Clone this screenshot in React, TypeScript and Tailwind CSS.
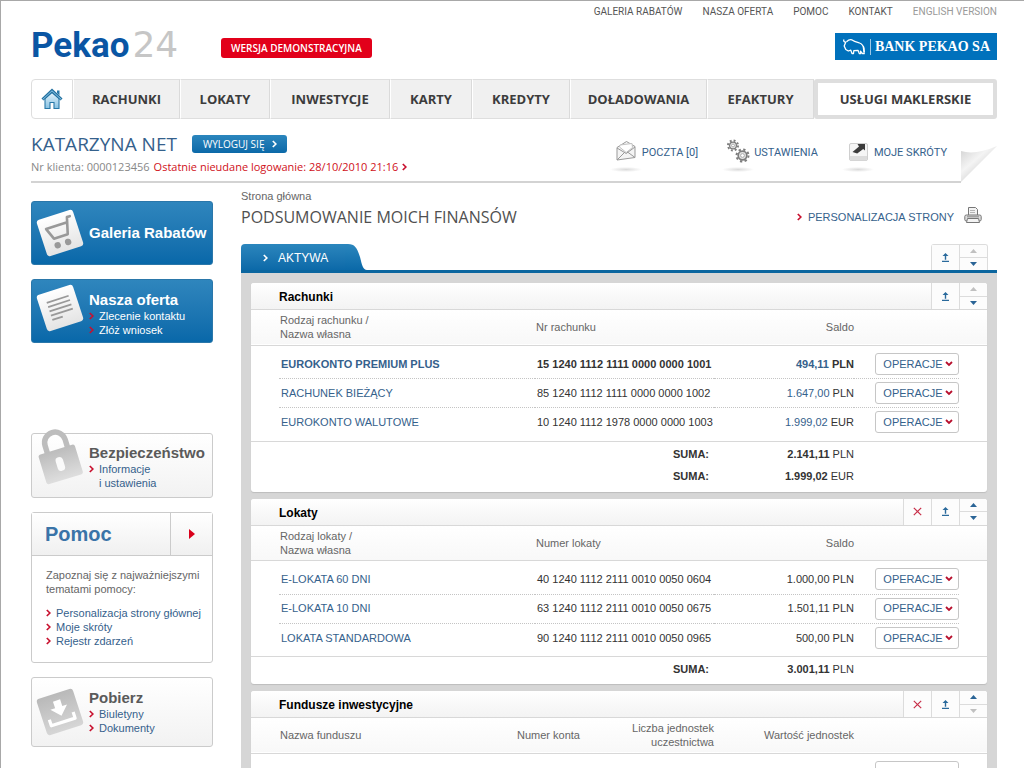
import React from "react";

const HEAD = "font-['Open_Sans',sans-serif]";
const CAPS = "font-[Roboto,sans-serif]";

function Chevron({ className = "text-[#c8102e]" }: { className?: string }) {
  return (
    <svg className={`h-2 w-[5px] shrink-0 ${className}`} viewBox="0 0 5 8" fill="none" stroke="currentColor" strokeWidth="1.7" aria-hidden="true">
      <path d="M.8 1 3.9 4 .8 7" />
    </svg>
  );
}

function HouseIcon() {
  return (
    <svg className="h-[22px] w-[22px]" viewBox="0 0 22 22" aria-hidden="true">
      <defs>
        <linearGradient id="house" x1="0" y1="0" x2="0" y2="1">
          <stop offset="0" stopColor="#e4f3fb" />
          <stop offset="1" stopColor="#86c1e2" />
        </linearGradient>
      </defs>
      <path d="M4 10.5V20.5h5v-6h4v6h5v-10L11 4.500z" fill="url(#house)" stroke="#2878a8" strokeWidth="1.1" />
      <path d="M16 2.500h2.500v5L16 5z" fill="#2878a8" />
      <path d="M1.500 11.500 11 2.500l9.500 9" fill="none" stroke="#22709f" strokeWidth="3" />
      <path d="M1.800 11.400 11 2.800l9.200 8.600" fill="none" stroke="#8cc8ea" strokeWidth="1" />
    </svg>
  );
}

function BisonIcon() {
  return (
    <svg className="h-[18px] w-6" viewBox="0 0 24 18" fill="none" stroke="#fff" strokeWidth="1.3" strokeLinejoin="round" aria-hidden="true">
      <path d="M2 1.500c-.8 1.600.2 2.800 1.800 2.600L2.200 8l1.600 3.500 2.500 1.500 2.500-.8 1.200 3.300h1.500l.3-2.800 4.200-.4 1.400 3.400h1.400l-.3-2.600 2.100 2.600h1.600L21.500 10.500c0-3-1.500-4.500-4-5.500S13 4 11 2.500 6.500 1.800 4.500 3.800" />
      <path d="M21.300 8c1 1.500 1 4 1 6" />
    </svg>
  );
}

function IconShadow({ children }: { children: React.ReactNode }) {
  return (
    <span className="flex w-8 flex-col items-center">
      {children}
      <span className="mt-1 h-[5px] w-8 bg-[radial-gradient(closest-side,#dadada,#ffffff)]" />
    </span>
  );
}

function EnvelopeIcon() {
  return (
    <svg className="h-6 w-6" viewBox="0 0 24 24" fill="#f4f4f4" stroke="#999" strokeWidth="1" strokeLinejoin="round" aria-hidden="true">
      <path d="M3 8.500 12.500 2.500l8.500 5v11l-18 2.500z" />
      <path d="M5.500 8 6 6l12-1.500.5 4-6.300 5z" fill="#fff" stroke="#c2c2c2" />
      <path d="M3 9l9.200 5.500L21 8M3 21l7.500-7.500M21 18.500l-7.500-5.500" fill="none" />
    </svg>
  );
}

function GearsIcon() {
  return (
    <svg className="h-6 w-6" viewBox="0 0 24 24" fill="none" stroke="#7d7d7d" aria-hidden="true">
      <circle cx="7" cy="6.500" r="3.400" strokeWidth="1.300" fill="#f0f0f0" />
      <circle cx="7" cy="6.500" r="5" strokeWidth="2" strokeDasharray="1.900 2.030" />
      <circle cx="7" cy="6.500" r="1.500" fill="#fff" stroke="#aaa" />
      <circle cx="16.500" cy="16.500" r="4.300" strokeWidth="1.700" fill="#e4e4e4" />
      <circle cx="16.500" cy="16.500" r="6" strokeWidth="2" strokeDasharray="2.300 2.410" />
      <circle cx="16.500" cy="16.500" r="1.900" fill="#fff" stroke="#aaa" />
    </svg>
  );
}

function ShortcutIcon() {
  return (
    <svg className="h-6 w-6" viewBox="0 0 24 24" aria-hidden="true">
      <rect x="3.500" y="4.500" width="18" height="17" rx="1.500" fill="#f5f5f5" stroke="#cfcfcf" />
      <path d="M4 17h17v3a1.500 1.500 0 0 1-1.500 1.500h-14A1.500 1.500 0 0 1 4 20z" fill="#dcdcdc" />
      <path d="M6.500 13 13 7.500 11.500 5H19v6.500l-1.800-1.500-6 4.500z" fill="#3c3c3c" />
    </svg>
  );
}

function PrinterIcon() {
  return (
    <svg className="h-[18px] w-[18px]" viewBox="0 0 18 18" fill="#f3f3f3" stroke="#777" aria-hidden="true">
      <path d="M4.500 9.500V1.500h7l2 2v6" />
      <path d="M6 4.500h5M6 6.500h5" stroke="#b5b5b5" />
      <rect x=".8" y="9" width="16.400" height="6" rx="1.500" fill="#ddd" />
      <path d="M3.500 12.500h11l1 4h-13z" />
      <path d="M3 10.800h12" stroke="#8b8b8b" />
    </svg>
  );
}

function TileIcon({ kind }: { kind: "cart" | "list" | "download" }) {
  const gray = kind === "download";
  return (
    <svg className="h-12 w-12 shrink-0" viewBox="0 0 48 48" aria-hidden="true">
      <defs>
        <linearGradient id={`tile-${kind}`} x1="0" y1="0" x2="0" y2="1">
          <stop offset="0" stopColor={gray ? "#b9b9b9" : "#ffffff"} />
          <stop offset="1" stopColor={gray ? "#d6d6d6" : "#e4e4e4"} />
        </linearGradient>
      </defs>
      <g transform="rotate(-18 24 24)">
        <rect x="5" y="5" width="38" height="38" rx="3" fill={`url(#tile-${kind})`} />
        {kind === "cart" && (
          <g fill="none" stroke="#999" strokeWidth="2.600" strokeLinejoin="round" strokeLinecap="round">
            <path d="M38.500 11h-3l-4.500 16.500H16.500L12 16h20.500" />
            <circle cx="18" cy="35" r="1.900" fill="#999" />
            <circle cx="29" cy="35" r="1.900" fill="#999" />
          </g>
        )}
        {kind === "list" && <path d="M13 15h23M13 19.500h23M13 24h23M13 28.500h23M13 33h11" stroke="#999" strokeWidth="1.800" />}
        {kind === "download" && (
          <g fill="#fff">
            <path d="M20.500 12h7.500v7h5l-8.700 9-8.800-9h5z" />
            <path d="M11.500 28v6.500h25V28" fill="none" stroke="#fff" strokeWidth="3.200" strokeLinejoin="round" />
          </g>
        )}
      </g>
    </svg>
  );
}

function LockIcon() {
  return (
    <svg className="-mt-2 h-[60px] w-12 shrink-0" viewBox="0 0 48 60" aria-hidden="true">
      <defs>
        <linearGradient id="lock" x1="0" y1="0" x2="0" y2="1">
          <stop offset="0" stopColor="#bcbcbc" />
          <stop offset="1" stopColor="#dedede" />
        </linearGradient>
      </defs>
      <g transform="rotate(-17 24 36)">
        <path d="M14.500 26V16a10.500 10.500 0 0 1 21 0v10" fill="none" stroke="#bdbdbd" strokeWidth="5.500" />
        <rect x="5" y="23" width="38" height="31" rx="2.500" fill="url(#lock)" />
        <rect x="20" y="31" width="7.500" height="14" rx="3.500" fill="#fafafa" />
      </g>
    </svg>
  );
}

const navItems = ["RACHUNKI", "LOKATY", "INWESTYCJE", "KARTY", "KREDYTY", "DOŁADOWANIA", "EFAKTURY"];

function Header() {
  return (
    <header>
      <div className={`flex h-5 items-center justify-end gap-5 text-[10px] text-[#555] ${CAPS}`}>
        <a href="#galeria">GALERIA RABATÓW</a>
        <a href="#oferta">NASZA OFERTA</a>
        <a href="#pomoc">POMOC</a>
        <a href="#kontakt">KONTAKT</a>
        <a href="#en" className="text-[#999]">ENGLISH VERSION</a>
      </div>
      <div className="flex h-[58px] items-start pt-2">
        <a href="#start" aria-label="Pekao24" className="flex w-[190px] items-baseline gap-[3px] leading-8">
          <span className="font-[Roboto,sans-serif] text-[35px] font-bold text-[#0a56a4]">Pekao</span>
          <span className="font-['DejaVu_Sans',sans-serif] text-[36px] text-[#c6c6c6]">24</span>
        </a>
        <span className={`mt-[9px] flex h-5 items-center rounded-[3px] bg-[#e2001a] px-[10px] text-[10px] font-semibold text-white ${HEAD}`}>
          WERSJA DEMONSTRACYJNA
        </span>
        <a href="#bank" className="mt-1 ml-auto flex h-[27px] items-center bg-[#0071bc] px-[7px] font-['Liberation_Serif',serif] text-[14px] font-bold text-white">
          <BisonIcon />
          <span className="mr-1 ml-1 h-4 w-px bg-[#9cc8e6]" />
          BANK PEKAO SA
        </a>
      </div>
      <nav className={`grid h-10 grid-cols-[42fr_107fr_90fr_120fr_82fr_98fr_137fr_107fr_183fr] text-[13px] font-bold text-[#3c3c3c] ${HEAD}`}>
        <a href="#home" aria-label="Start" className="flex items-center justify-center rounded-l-sm border border-[#dedede] bg-white">
          <HouseIcon />
        </a>
        {navItems.map((item) => (
          <a key={item} href={`#${item.toLowerCase()}`} className="flex items-center justify-center border-y border-r border-l border-y-[#dedede] border-r-[#dadada] border-l-white bg-[#f0f0f0] pt-[2px]">
            {item}
          </a>
        ))}
        <a href="#maklerskie" className="flex items-center justify-center rounded-[3px] border-4 border-[#dedede] bg-white pt-[2px]">
          USŁUGI MAKLERSKIE
        </a>
      </nav>
    </header>
  );
}

function UserBar() {
  return (
    <section className="flex h-16 items-end">
      <div className="flex h-16 grow items-start justify-between border-b-2 border-[#d3d3d3]">
        <div>
          <div className="flex h-[41px] items-end gap-[15px]">
            <h2 className={`text-[19px] leading-8 text-[#35618c] ${HEAD}`}>KATARZYNA NET</h2>
            <button type="button" className={`mb-[7px] flex h-[18px] items-center gap-2 rounded-[3px] bg-linear-to-b from-[#2b86bd] to-[#0a69a8] pr-[10px] pl-[11px] text-[10px] text-white ${HEAD}`}>
              WYLOGUJ SIĘ <Chevron className="text-white" />
            </button>
          </div>
          <p className={`flex items-center gap-1 text-[11px] leading-[14px] text-[#888] ${HEAD}`}>
            Nr klienta: 0000123456
            <a href="#logowania" className="flex items-center gap-1 text-[#d01020]">
              Ostatnie nieudane logowanie: 28/10/2010 21:16 <Chevron />
            </a>
          </p>
        </div>
        <div className={`flex gap-6 pt-5 pr-[14px] text-[11px] leading-7 text-[#35618c] ${CAPS}`}>
          <a href="#poczta" className="flex"><IconShadow><EnvelopeIcon /></IconShadow>POCZTA [0]</a>
          <a href="#ustawienia" className="flex"><IconShadow><GearsIcon /></IconShadow>USTAWIENIA</a>
          <a href="#skroty" className="flex"><IconShadow><ShortcutIcon /></IconShadow>MOJE SKRÓTY</a>
        </div>
      </div>
      <svg className="h-[37px] w-9 shrink-0" viewBox="0 0 36 37" aria-hidden="true">
        <defs>
          <linearGradient id="curl" x1="0" y1="0" x2=".6" y2=".7">
            <stop offset="0" stopColor="#d0d0d0" />
            <stop offset=".6" stopColor="#f4f4f4" />
            <stop offset="1" stopColor="#d6d6d6" />
          </linearGradient>
        </defs>
        <path d="M0 5c10 3 22 1 36-5L0 36z" fill="url(#curl)" />
      </svg>
    </section>
  );
}

function SideLink({ children, className = "text-[#35618c]" }: { children: React.ReactNode; className?: string }) {
  return (
    <li className="flex items-start gap-[5px]">
      <Chevron className="mt-[3px] text-[#c8102e]" />
      <a href="#more" className={className}>{children}</a>
    </li>
  );
}

const blueCard = "flex h-16 rounded-[3px] border border-[#2a77aa] bg-linear-to-b from-[#2f86bd] to-[#0868a9] text-white";
const grayCard = "flex rounded-[3px] border border-[#cbcbcb] bg-linear-to-b from-white to-[#f2f2f2]";

function Sidebar() {
  return (
    <aside className="w-[182px] shrink-0 pt-[18px] text-[11px] leading-[14px]">
      <a href="#galeria" className={`${blueCard} items-center gap-[5px] pl-1`}>
        <TileIcon kind="cart" />
        <span className="text-[15px] font-bold whitespace-nowrap">Galeria Rabatów</span>
      </a>
      <div className={`${blueCard} mt-[14px] gap-[5px] pt-1 pl-1`}>
        <TileIcon kind="list" />
        <div className="pt-[7px]">
          <h3 className="text-[15px] leading-[18px] font-bold">Nasza oferta</h3>
          <ul>
            <SideLink className="text-white">Zlecenie kontaktu</SideLink>
            <SideLink className="text-white">Złóż wniosek</SideLink>
          </ul>
        </div>
      </div>
      <div className={`${grayCard} mt-[90px] h-[65px] gap-[5px] pl-1`}>
        <LockIcon />
        <div className="pt-[10px]">
          <h3 className="text-[15px] leading-[18px] font-bold text-[#5a5a5a]">Bezpieczeństwo</h3>
          <ul>
            <SideLink>Informacje<br />i ustawienia</SideLink>
          </ul>
        </div>
      </div>
      <div className="mt-[14px] rounded-[3px] border border-[#cbcbcb] bg-white">
        <div className="flex h-[43px] items-stretch border-b border-[#cbcbcb] bg-linear-to-b from-white to-[#f0f0f0]">
          <h3 className="flex grow items-center pl-[13px] text-[20px] font-bold text-[#3a74a8]">Pomoc</h3>
          <a href="#pomoc" aria-label="Pomoc" className="flex w-[42px] items-center justify-center border-l border-[#cbcbcb]">
            <svg className="h-[10px] w-[6px]" viewBox="0 0 6 10" aria-hidden="true"><path d="M0 0 6 5 0 10z" fill="#d9001b" /></svg>
          </a>
        </div>
        <div className="h-[106px] pt-3 pl-[14px] text-[#666]">
          <p>Zapoznaj się z najważniejszymi<br />tematami pomocy:</p>
          <ul className="mt-[10px]">
            <SideLink>Personalizacja strony głównej</SideLink>
            <SideLink>Moje skróty</SideLink>
            <SideLink>Rejestr zdarzeń</SideLink>
          </ul>
        </div>
      </div>
      <div className={`${grayCard} mt-[14px] h-[70px] gap-[5px] pt-[10px] pl-1`}>
        <TileIcon kind="download" />
        <div>
          <h3 className="text-[15px] leading-[19px] font-bold text-[#5a5a5a]">Pobierz</h3>
          <ul>
            <SideLink>Biuletyny</SideLink>
            <SideLink>Dokumenty</SideLink>
          </ul>
        </div>
      </div>
    </aside>
  );
}

function Controls({ closable = false, up = true, down = true }: { closable?: boolean; up?: boolean; down?: boolean }) {
  const cell = "flex w-7 items-center justify-center border-l border-[#dcdcdc] bg-[#fcfcfc]";
  return (
    <div className="flex items-stretch">
      {closable && (
        <button type="button" aria-label="Usuń" className={cell}>
          <svg className="h-[9px] w-[9px]" viewBox="0 0 9 9" stroke="#c8304a" strokeWidth="1.200" aria-hidden="true"><path d="M.8.800l7.400 7.400M8.200.800.800 8.200" /></svg>
        </button>
      )}
      <button type="button" aria-label="Zwiń" className={cell}>
        <svg className="h-[9px] w-[7px]" viewBox="0 0 7 9" fill="#2a6a9c" aria-hidden="true"><path d="M3.500 0 6.500 3H4.200v3.800H2.800V3H.5zM0 7.800h7V9H0z" /></svg>
      </button>
      <div className="flex w-7 flex-col border-l border-[#dcdcdc] bg-[#fcfcfc]">
        <button type="button" aria-label="W górę" disabled={!up} className={`flex grow items-center justify-center border-b border-[#dcdcdc] ${up ? "text-[#2a6496]" : "text-[#c0c0c0]"}`}>
          <svg className="h-1 w-[7px]" viewBox="0 0 7 4" fill="currentColor" aria-hidden="true"><path d="M3.500 0 7 4H0z" /></svg>
        </button>
        <button type="button" aria-label="W dół" disabled={!down} className={`flex grow items-center justify-center ${down ? "text-[#2a6496]" : "text-[#c0c0c0]"}`}>
          <svg className="h-1 w-[7px]" viewBox="0 0 7 4" fill="currentColor" aria-hidden="true"><path d="M0 0h7L3.500 4z" /></svg>
        </button>
      </div>
    </div>
  );
}

function Panel({ title, closable, up, down, children }: { title: string; closable?: boolean; up?: boolean; down?: boolean; children: React.ReactNode }) {
  return (
    <section className="overflow-hidden rounded-[3px] bg-white shadow-[0_1px_1px_#bdbdbd]">
      <div className="flex h-[27px] items-stretch justify-between border-b border-[#d8d8d8] bg-linear-to-b from-white to-[#f3f3f3]">
        <h3 className="pl-7 text-[12px] leading-7 font-bold text-black">{title}</h3>
        <Controls closable={closable} up={up} down={down} />
      </div>
      {children}
    </section>
  );
}

function OperationsButton() {
  return (
    <button type="button" className="inline-flex h-[22px] w-[84px] items-center justify-center gap-[2px] rounded-[3px] border border-[#c6c6c6] bg-white pl-[2px] align-middle text-[11px] font-normal text-[#35618c]">
      OPERACJE
      <svg className="h-[6px] w-2" viewBox="0 0 8 6" fill="none" stroke="#b8102e" strokeWidth="1.800" aria-hidden="true"><path d="M1 1l3 3 3-3" /></svg>
    </button>
  );
}

type Row = { name: string; number: string; amount: string; currency: string; strong?: boolean };
type Sum = { amount: string; currency: string };

const headRow = "h-[35px] border-b border-[#d8d8d8] bg-linear-to-b from-white to-[#f8f8f8] leading-[14px] text-[#666]";

function ProductTable({ head, rows, sums, linked }: { head: [string, string, string]; rows: Row[]; sums: Sum[]; linked?: boolean }) {
  return (
    <table className="w-full table-fixed border-collapse text-[11px] text-[#333]">
      <colgroup>
        <col className="w-7" />
        <col />
        <col className="w-[179px]" />
        <col className="w-[140px]" />
        <col className="w-[105px]" />
        <col className="w-7" />
      </colgroup>
      <thead>
        <tr className={headRow}>
          <th />
          <th className="pl-px text-left font-normal">{head[0]} /<br />Nazwa własna</th>
          <th className="pl-px text-left font-normal">{head[1]}</th>
          <th className="text-right font-normal">{head[2]}</th>
          <th colSpan={2} />
        </tr>
      </thead>
      <tbody className="before:block before:h-1 after:block after:h-1">
        {rows.map((row, i) => {
          const line = i < rows.length - 1 ? "border-b border-dotted border-[#c4c4c4]" : "";
          return (
            <tr key={row.name} className={`h-[29px] ${row.strong ? "font-bold" : ""}`}>
              <td />
              <td className={`pl-[2px] ${line}`}><a href="#konto" className="text-[#35618c]">{row.name}</a></td>
              <td className={`pl-[2px] whitespace-nowrap ${line}`}>{row.number}</td>
              <td className={`text-right ${line}`}>
                {linked ? <a href="#saldo" className="text-[#35618c]">{row.amount}</a> : row.amount} {row.currency}
              </td>
              <td className={`text-right ${line}`}><OperationsButton /></td>
              <td />
            </tr>
          );
        })}
      </tbody>
      <tfoot className={`border-t border-[#d8d8d8] before:block after:block after:h-1 ${sums.length > 1 ? "before:h-[2px]" : "before:h-px"}`}>
        {sums.map((sum) => (
          <tr key={sum.currency} className="h-[22px]">
            <td colSpan={2} />
            <td className="pr-[5px] text-right font-bold">SUMA:</td>
            <td className="text-right"><b>{sum.amount}</b> {sum.currency}</td>
            <td colSpan={2} />
          </tr>
        ))}
      </tfoot>
    </table>
  );
}

const accounts: Row[] = [
  { name: "EUROKONTO PREMIUM PLUS", number: "15 1240 1112 1111 0000 0000 1001", amount: "494,11", currency: "PLN", strong: true },
  { name: "RACHUNEK BIEŻĄCY", number: "85 1240 1112 1111 0000 0000 1002", amount: "1.647,00", currency: "PLN" },
  { name: "EUROKONTO WALUTOWE", number: "10 1240 1112 1978 0000 0000 1003", amount: "1.999,02", currency: "EUR" },
];

const deposits: Row[] = [
  { name: "E-LOKATA 60 DNI", number: "40 1240 1112 2111 0010 0050 0604", amount: "1.000,00", currency: "PLN" },
  { name: "E-LOKATA 10 DNI", number: "63 1240 1112 2111 0010 0050 0675", amount: "1.501,11", currency: "PLN" },
  { name: "LOKATA STANDARDOWA", number: "90 1240 1112 2111 0010 0050 0965", amount: "500,00", currency: "PLN" },
];

function FundsTable() {
  return (
    <table className="w-full table-fixed border-collapse text-[11px] text-[#333]">
      <colgroup>
        <col className="w-7" />
        <col />
        <col className="w-[100px]" />
        <col className="w-[134px]" />
        <col className="w-[140px]" />
        <col className="w-[105px]" />
        <col className="w-7" />
      </colgroup>
      <thead>
        <tr className={headRow}>
          <th />
          <th className="pl-px text-left font-normal">Nazwa funduszu</th>
          <th className="text-right font-normal">Numer konta</th>
          <th className="text-right font-normal">Liczba jednostek<br />uczestnictwa</th>
          <th className="text-right font-normal">Wartość jednostek</th>
          <th colSpan={2} />
        </tr>
      </thead>
      <tbody className="before:block before:h-1">
        <tr className="h-[29px]">
          <td colSpan={5} />
          <td className="text-right"><OperationsButton /></td>
          <td />
        </tr>
      </tbody>
    </table>
  );
}

function Summary() {
  return (
    <main className="min-w-0 grow pt-[6px]">
      <p className="text-[11px] leading-[14px] text-[#666]">Strona główna</p>
      <div className="flex h-7 items-center">
        <h1 className={`text-[16px] leading-7 text-[#505050] ${HEAD}`}>PODSUMOWANIE MOICH FINANSÓW</h1>
        <a href="#personalizacja" className="ml-auto flex items-center gap-[6px] text-[11px] text-[#35618c]">
          <Chevron /> PERSONALIZACJA STRONY
        </a>
        <button type="button" aria-label="Drukuj" className="mr-[15px] mb-1 ml-[10px]"><PrinterIcon /></button>
      </div>
      <div className="mt-[13px] flex h-[29px] items-stretch justify-between border-b-[3px] border-[#0b669f]">
        <button type="button" className="flex items-stretch text-[12px] text-white">
          <span className="flex w-[104px] items-center gap-[10px] rounded-tl-[4px] bg-linear-to-b from-[#2b86bd] to-[#0b69a8] pt-[2px] pl-[22px]">
            <Chevron className="text-white" /> AKTYWA
          </span>
          <svg className="h-[26px] w-[22px]" viewBox="0 0 22 26" preserveAspectRatio="none" aria-hidden="true">
            <defs>
              <linearGradient id="tab" x1="0" y1="0" x2="0" y2="1">
                <stop offset="0" stopColor="#2b86bd" />
                <stop offset="1" stopColor="#0b69a8" />
              </linearGradient>
            </defs>
            <path d="M0 0h3c7 0 9 4 12 13 2 8 3 13 7 13H0z" fill="url(#tab)" />
          </svg>
        </button>
        <div className="mr-[9px] flex overflow-hidden rounded-t-[3px] border-t border-r border-[#dcdcdc]">
          <Controls up={false} />
        </div>
      </div>
      <div className="flex flex-col gap-[7px] bg-[#d6d6d6] p-[10px]">
        <Panel title="Rachunki" up={false}>
          <ProductTable
            head={["Rodzaj rachunku", "Nr rachunku", "Saldo"]}
            rows={accounts}
            linked
            sums={[{ amount: "2.141,11", currency: "PLN" }, { amount: "1.999,02", currency: "EUR" }]}
          />
        </Panel>
        <Panel title="Lokaty" closable>
          <ProductTable head={["Rodzaj lokaty", "Numer lokaty", "Saldo"]} rows={deposits} sums={[{ amount: "3.001,11", currency: "PLN" }]} />
        </Panel>
        <Panel title="Fundusze inwestycyjne" closable down={false}>
          <FundsTable />
        </Panel>
      </div>
    </main>
  );
}

export default function App() {
  return (
    <div className="min-h-screen border-t border-l border-[#a8a8a8] bg-white pr-[27px] pl-[30px] font-['Liberation_Sans',Arial,sans-serif]">
      <Header />
      <UserBar />
      <div className="flex gap-7">
        <Sidebar />
        <Summary />
      </div>
    </div>
  );
}
